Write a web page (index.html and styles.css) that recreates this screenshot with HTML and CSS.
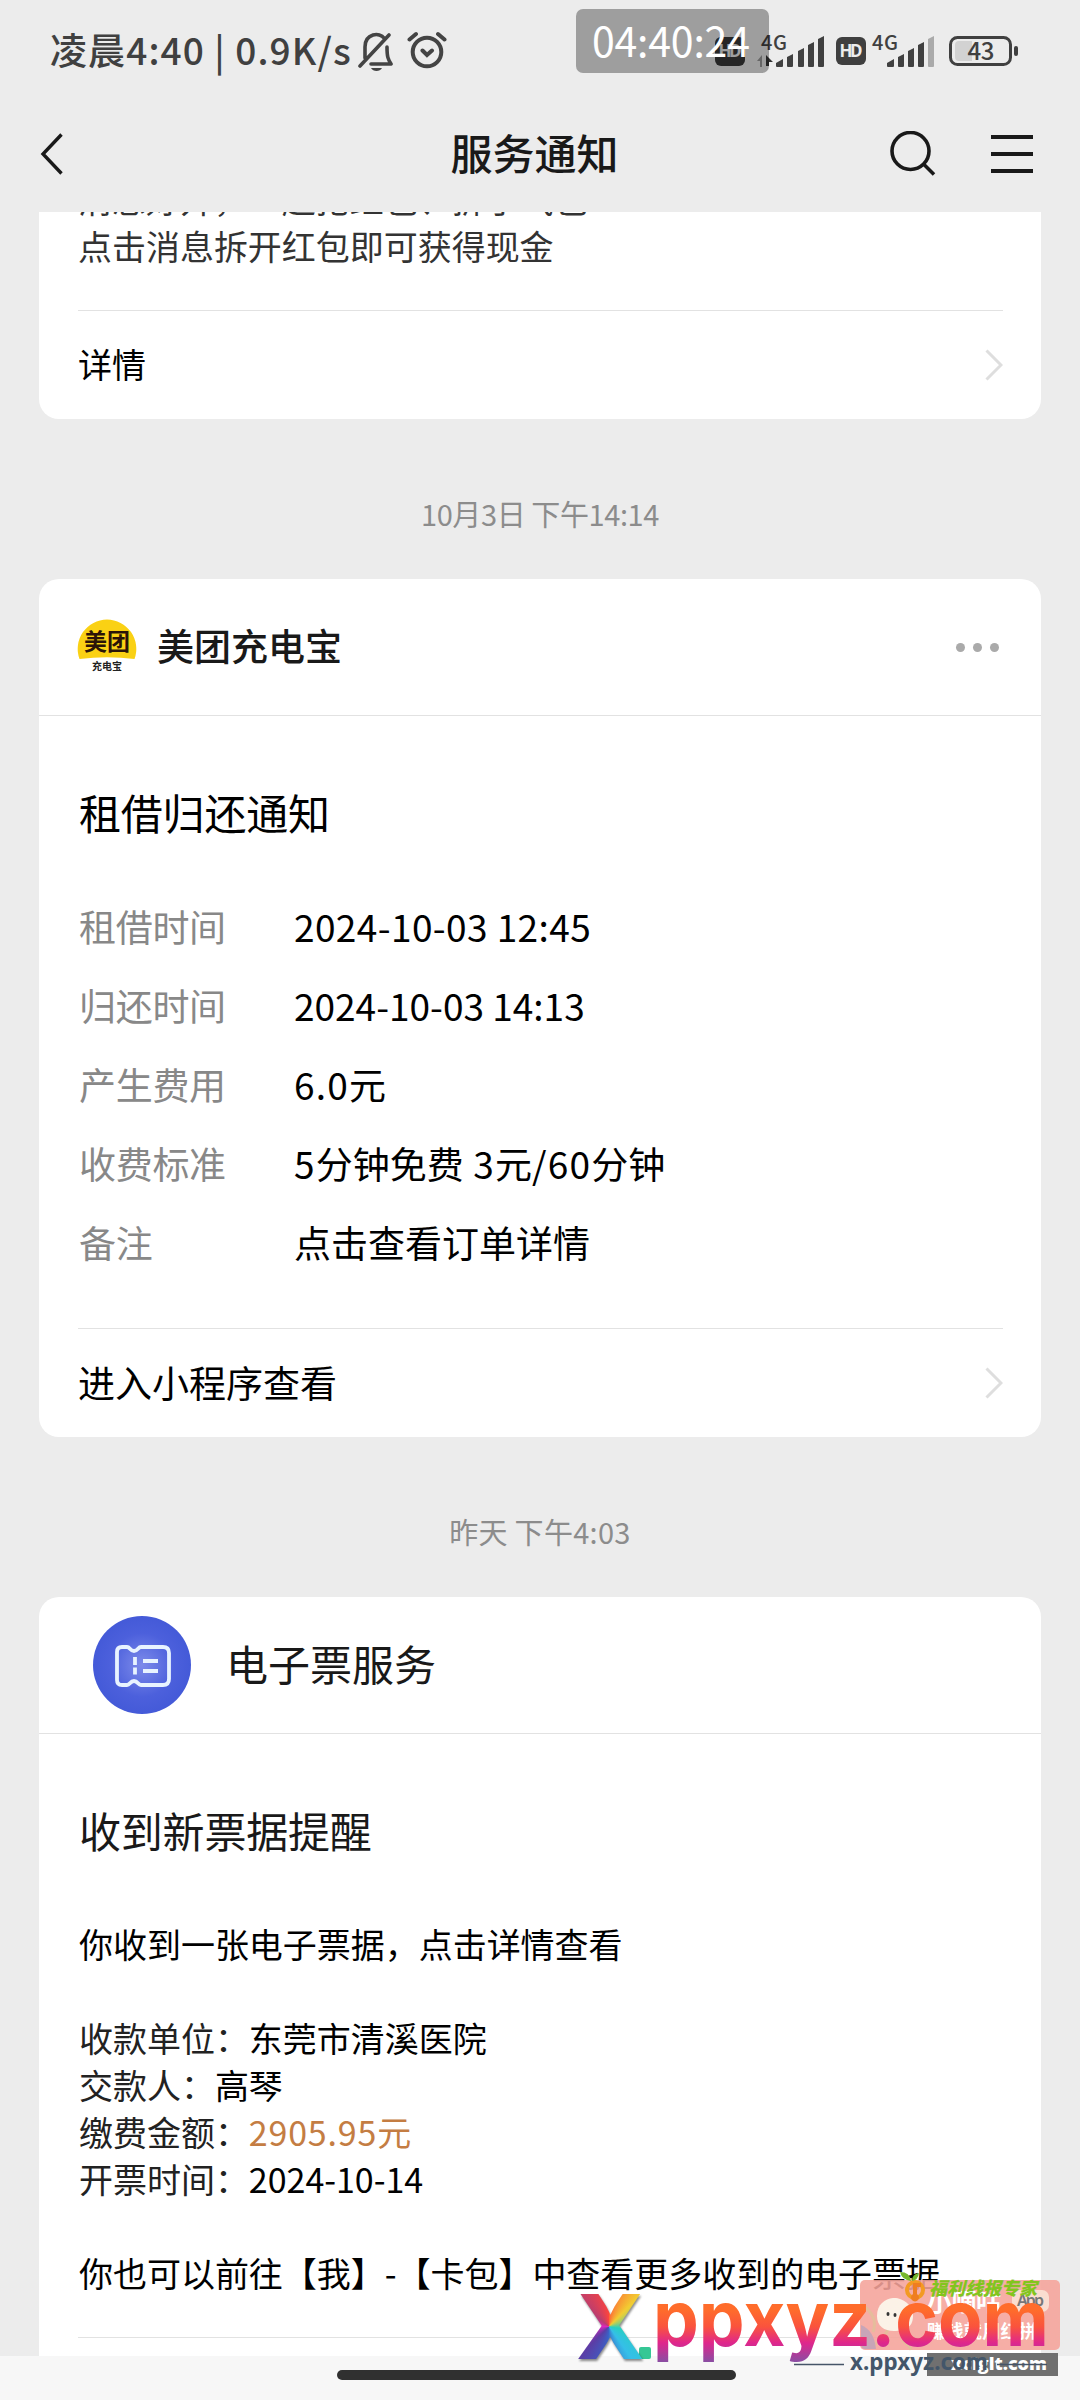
FILE: index.html
```html
<!DOCTYPE html>
<html lang="zh-CN">
<head>
<meta charset="utf-8">
<title>服务通知</title>
<link rel="stylesheet" href="styles.css">
</head>
<body>
<div class="screen">
  <header class="top">
    <div class="status">
      <span class="clock">凌晨4:40 | 0.9K/s</span>
      <svg class="bell" width="36" height="40" viewBox="0 0 36 40" fill="none" stroke="#444" stroke-width="3.6" stroke-linecap="round" stroke-linejoin="round"><path d="M7 26V15C7 1 22 0 26 6M31 3L2 34M29 15c0 10 1 12 4 17H13"/><path d="M13 36h11c-2 4-9 4-11 0z" fill="#444" stroke="none"/></svg>
      <svg class="alarm" width="40" height="40" viewBox="0 0 40 40" fill="none" stroke="#444" stroke-width="4" stroke-linecap="round"><circle cx="20" cy="22" r="14.3"/><path d="M2.500 9.500L9 4M37.500 9.500L31 4M15.500 20.500L20 25l5-4.500"/></svg>
      <svg class="signals" width="310" height="50" viewBox="0 0 310 50">
        <rect x="5" y="11" width="30" height="29" rx="6" fill="#3a3a3a"/><text class="hd" x="8.500" y="31" textLength="23">HD</text>
        <text class="net" x="51" y="24" textLength="26">4G</text>
        <path fill="#999" d="M47 35l5-6v12h-2v-6z"/><path fill="#333" d="M56 29l7 7h-4v4h-3z"/>
        <g fill="#404040"><path d="M66 37l7-4v7a1 1 0 0 1-1 1h-5a1 1 0 0 1-1-1zM77 31l6-3v12a1 1 0 0 1-1 1h-4a1 1 0 0 1-1-1zM88 25l6-3v18a1 1 0 0 1-1 1h-4a1 1 0 0 1-1-1zM98 19l6-3v24a1 1 0 0 1-1 1h-4a1 1 0 0 1-1-1zM108 13l6-3v30a1 1 0 0 1-1 1h-4a1 1 0 0 1-1-1z"/></g>
        <rect x="126" y="11" width="30" height="28" rx="6" fill="#3f3f3f"/><text class="hd" x="129.500" y="31" textLength="23">HD</text>
        <text class="net" x="162" y="24" textLength="26">4G</text>
        <path fill="#404040" d="M177 37l7-4v7a1 1 0 0 1-1 1h-5a1 1 0 0 1-1-1zM188 31l6-3v12a1 1 0 0 1-1 1h-4a1 1 0 0 1-1-1zM198 25l6-3v18a1 1 0 0 1-1 1h-4a1 1 0 0 1-1-1zM208 19l6-3v24a1 1 0 0 1-1 1h-4a1 1 0 0 1-1-1z"/><path fill="#aaa" d="M218 13l6-3v30a1 1 0 0 1-1 1h-4a1 1 0 0 1-1-1z"/>
        <path fill="#d2d2d2" d="M249 15h13v20h-13a4 4 0 0 1-4-4V19a4 4 0 0 1 4-4z"/>
        <rect x="240.500" y="11.500" width="60" height="27" rx="7" fill="none" stroke="#404040" stroke-width="3"/><rect x="304" y="20" width="4" height="10" rx="2" fill="#404040"/>
        <text class="battery" x="257.500" y="34" textLength="27">43</text>
      </svg>
      <div class="timer">04:40:24</div>
    </div>
    <nav class="nav">
      <svg width="24" height="42" viewBox="0 0 24 42" fill="none" stroke="#191919" stroke-width="3.4"><path d="M21.500 1.500L3 21l18.500 19.500"/></svg>
      <h1>服务通知</h1>
      <div class="tools">
        <svg width="46" height="46" viewBox="0 0 46 46" fill="none" stroke="#191919" stroke-width="3.600"><circle cx="20.500" cy="20" r="18.500"/><path d="M33.500 33L44 43.500"/></svg>
        <svg width="42" height="40" viewBox="0 0 42 40" fill="#191919"><path d="M0 1h42v4H0zM0 18h42v4H0zM0 35h42v4H0z"/></svg>
      </div>
    </nav>
  </header>

  <main class="feed">
    <section class="card card-cut">
      <div class="message muted">消息好开，一起抢红包、拆了气包<br>点击消息拆开红包即可获得现金</div>
      <a class="more small">详情<svg class="chev" width="18" height="32" viewBox="0 0 18 32"><path d="M1.500 1.500L16 16 1.500 30.500"/></svg></a>
    </section>

    <time class="date tight">10月3日 下午14:14</time>

    <section class="card">
      <div class="card-head">
        <svg class="logo" width="60" height="60" viewBox="0 0 60 60"><path fill="#fad114" d="M2.500 43A29.300 29.300 0 1 1 57.500 43Q30 39.500 2.500 43z"/><text class="logo-main" x="7" y="33.500" textLength="46">美团</text><text class="logo-sub" x="15" y="54" textLength="30">充电宝</text></svg>
        <span class="name bold">美团充电宝</span>
        <span class="dots"><i></i><i></i><i></i></span>
      </div>
      <div class="detail">
        <h2>租借归还通知</h2>
        <dl>
          <dt>租借时间</dt><dd class="wide">2024-10-03 12:45</dd>
          <dt>归还时间</dt><dd>2024-10-03 14:13</dd>
          <dt>产生费用</dt><dd><span class="num">6.0</span>元</dd>
          <dt>收费标准</dt><dd><span class="num">5</span>分钟免费<span class="num"> 3</span>元<span class="num">/60</span>分钟</dd>
          <dt>备注</dt><dd>点击查看订单详情</dd>
        </dl>
      </div>
      <a class="more">进入小程序查看<svg class="chev" width="18" height="32" viewBox="0 0 18 32"><path d="M1.500 1.500L16 16 1.500 30.500"/></svg></a>
    </section>

    <time class="date">昨天 下午4:03</time>

    <section class="card">
      <div class="card-head ticket-head">
        <svg width="98" height="98" viewBox="0 0 98 98"><defs><radialGradient id="glow"><stop offset="0" stop-color="#7d8bea"/><stop offset=".65" stop-color="#4c60dc"/><stop offset="1" stop-color="#445ad8"/></radialGradient></defs><circle cx="49" cy="49" r="49" fill="url(#glow)"/><g fill="none" stroke="#e8f3ff" stroke-width="3.800" stroke-linejoin="round"><path d="M29 31h5c3 0 3 4 7 4s4-4 7-4h22q6 0 6 6v26q0 6-6 6H48c-3 0-3-4-7-4s-4 4-7 4h-5q-5 0-5-5V36q0-5 5-5z"/><path d="M50 45h15M50 55h15M42 41v8M42 51.500v7"/></g></svg>
        <span class="name">电子票服务</span>
      </div>
      <div class="ticket">
        <h2>收到新票据提醒</h2>
        <div class="message">你收到一张电子票据，点击详情查看<br><br><span>收款单位：</span>东莞市清溪医院<br><span>交款人：</span>高琴<br><span>缴费金额：</span><b>2905.95元</b><br><span>开票时间：</span>2024-10-14<br><br>你也可以前往【我】-【卡包】中查看更多收到的电子票据</div>
      </div>
      <a class="more"></a>
    </section>
  </main>

  <footer class="home"><div class="handle"></div></footer>

  <div class="promo">
    <svg width="210" height="110" viewBox="0 0 210 110">
      <rect y="10" width="200" height="70" rx="5" fill="#f5a39a" opacity=".88"/>
      <path d="M1 34q18 12 12 28M10 78q15-10 20-22M42 70q8 6 9 10" stroke="#e5bd9c" stroke-width="3" fill="none"/><path d="M1 55q13 5 15 24H5q-4 0-4-5z" fill="#c8a5b7"/>
      <path d="M17 46c0-12 8-17 16-18s20 6 20 18-9 15-19 15-17-5-17-15z" fill="#fbf2e7"/><g fill="#333"><ellipse cx="28" cy="44" rx="1.500" ry="2"/><ellipse cx="35" cy="45" rx="1.500" ry="2"/></g>
      <rect x="152" y="20" width="37" height="22" rx="7" fill="#faddd0"/><text class="app" x="157" y="36" textLength="27">App</text>
      <text class="promo-name" x="67" y="41" textLength="74">小嘀咕</text><text class="promo-sub" x="67" y="68" textLength="110">赚钱就用红拼</text>
      <circle cx="55" cy="20" r="8" fill="none" stroke="#f39a22" stroke-width="4"/><path fill="#ef7d21" d="M53 24V13h8v4h-4v7a4 4 0 1 1-4 0z"/><path fill="#75b82d" d="M40 2q10 0 11 9-9-1-11-9M52 11q0-7 7-8-1 7-7 8"/>
      <text class="green" x="69" y="25" textLength="108">福利线报专家</text>
      <rect x="67" y="83" width="131" height="23" fill="#707070"/><text class="forum" x="91" y="100" textLength="96" lengthAdjust="spacingAndGlyphs">xciglt.com</text>
    </svg>
  </div>
  <div class="site">
    <span class="site-x">X</span>
    <svg width="490" height="100" viewBox="0 0 490 100"><defs><linearGradient id="flame" gradientUnits="userSpaceOnUse" x1="0" y1="18" x2="0" y2="78"><stop offset=".1" stop-color="#ff6c2b"/><stop offset=".38" stop-color="#fa533d"/><stop offset=".65" stop-color="#df268d"/><stop offset="1" stop-color="#8052a5"/></linearGradient></defs>
      <rect x="69" y="61" width="12" height="12" rx="2" fill="#35c795"/>
      <text class="site-name" x="83" y="60" textLength="396" lengthAdjust="spacingAndGlyphs">ppxyz.com</text>
      <path d="M224 78.500h50M427 78.500h50" stroke="#465568" stroke-width="1.500"/><text class="site-url" x="280" y="84" textLength="138" lengthAdjust="spacingAndGlyphs">x.ppxyz.com</text>
    </svg>
  </div>
</div>
</body>
</html>
```
FILE: styles.css
```css
* { box-sizing: border-box; }
body { margin: 0; background: #ececec; font-family: "Noto Sans CJK SC", sans-serif; color: #000; }
.screen { position: relative; width: 1080px; height: 2400px; overflow: hidden; display: flex; flex-direction: column; background: #ececec; }
h1, h2, dl, dd { margin: 0; font-weight: 400; }
svg { display: block; flex: none; }

.top { height: 212px; flex: none; display: flex; flex-direction: column; position: relative; z-index: 1; background: #ececec; }
.status { position: relative; height: 100px; display: flex; align-items: flex-start; padding: 0 60px 0 50px; }
.clock { width: 308px; font-size: 37px; line-height: 60px; margin-top: 19px; color: #404040; font-weight: 500; white-space: nowrap; letter-spacing: 1.1px; }
.bell { margin-top: 32px; }
.alarm { margin: 30px 0 0 13px; }
.signals { margin: 26px 0 0 263px; }
.hd { font: 700 17px "Noto Sans", sans-serif; fill: #ececec; }
.net { font: 500 20px "Noto Sans CJK SC", sans-serif; fill: #404040; }
.battery { font: 500 24px "Noto Sans CJK SC", sans-serif; fill: #404040; }
.timer { position: absolute; left: 576px; top: 9px; width: 193px; height: 64px; border-radius: 7px; background: rgba(0,0,0,.33); color: #fff; font-size: 41px; line-height: 61px; padding-left: 16px; letter-spacing: -.2px; white-space: nowrap; }
.nav { height: 112px; display: grid; grid-template-columns: 200px 1fr 200px; align-items: center; padding: 0 47px 5px 40px; }
.nav h1 { text-align: center; font-size: 42px; line-height: 60px; font-weight: 500; color: #191919; padding: 0 4px 4px 0; }
.tools { display: flex; justify-content: flex-end; align-items: center; gap: 55px; }

.feed { flex: 1; min-height: 0; overflow: hidden; padding: 0 39px; }
.card { background: #fff; border-radius: 20px; overflow: hidden; }
.card-cut { margin-top: -36px; }
.message { padding: 0 40px 41px 40px; font-size: 34px; line-height: 47px; letter-spacing: -.03px; white-space: nowrap; }
.card-cut .message { margin-top: -1px; height: 135px; padding-left: 39px; }
.muted { color: #333; }
.more { height: 109px; margin: 0 38px 0 39px; border-top: 1px solid #e2e2e2; display: flex; justify-content: space-between; align-items: center; font-size: 37px; line-height: 56px; padding-bottom: 3px; }
.more.small { font-size: 34px; }
.chev { fill: none; stroke: #dedede; stroke-width: 3; position: relative; top: 1px; }
.date { display: block; height: 160px; padding-top: 30px; line-height: 128px; text-align: center; font-size: 29px; color: #8c8c8c; letter-spacing: .3px; }
.tight { letter-spacing: -.4px; }
.card-head { height: 137px; border-bottom: 1px solid #e2e2e2; display: flex; align-items: center; padding: 0 38px; }
.logo { margin-top: -3px; }
.logo-main { font: 700 23px "Noto Sans CJK SC", sans-serif; fill: #2b1408; }
.logo-sub { font: 700 10px "Noto Sans CJK SC", sans-serif; fill: #222; }
.name { margin-left: 20px; font-size: 37px; color: #191919; padding-bottom: 4px; }
.bold { font-weight: 500; }
.dots { margin-left: auto; display: flex; gap: 8px; padding-right: 4px; }
.dots i { width: 9px; height: 9px; border-radius: 50%; background: #aaa; }
.detail { padding: 66px 40px 47px; }
h2 { font-size: 42px; line-height: 60px; letter-spacing: -.2px; }
dl { margin-top: 44px; display: grid; grid-template-columns: 215px 1fr; grid-auto-rows: 79px; align-items: center; font-size: 37px; white-space: nowrap; }
dt { color: #888; letter-spacing: -.3px; }
.wide { letter-spacing: .4px; }
.num { letter-spacing: 1.2px; white-space: pre; }
.ticket-head { padding-left: 54px; }
.ticket-head .name { margin-left: 35px; font-size: 42px; padding-bottom: 5px; }
.ticket { padding-top: 66px; }
.ticket h2 { padding-left: 40px; color: #191919; }
.ticket .message { margin-top: 60px; }
.message span { color: #222; }
.message b { font-weight: 400; color: #c47d43; letter-spacing: .8px; }

.home { height: 44px; flex: none; background: #f7f7f7; padding: 14px 0 0 337px; }
.handle { width: 399px; height: 10px; border-radius: 5px; background: #303030; }

.promo { position: absolute; left: 860px; top: 2270px; }
.app { font: 600 16px "Noto Sans", sans-serif; fill: #777; }
.promo-name { font: 700 25px "Noto Sans CJK SC", sans-serif; fill: #fff; }
.promo-sub { font: 700 18px "Noto Sans CJK SC", sans-serif; fill: #fff; }
.green { font: italic 900 18px "Noto Sans CJK SC", sans-serif; fill: #82c51e; }
.forum { font: 800 17px "Open Sans", sans-serif; fill: #fff; }
.site { position: absolute; left: 570px; top: 2286px; width: 490px; height: 100px; }
.site-x { position: absolute; left: 6px; top: 8px; height: 65px; width: 66px; font: 800 90px/65px Inter, sans-serif; color: transparent; background: conic-gradient(from 0deg at 50% 50%, #ff6036, #f2cd32 45deg, #26d0c0 100deg, #35bfe8 145deg, #3b60c5 185deg, #5b3da5 225deg, #df26bd 270deg, #b93d70 310deg, #ff443c); background-clip: text; -webkit-background-clip: text; filter: drop-shadow(1px 2px 1px rgba(0,0,0,.45)); }
.site-name { font: 700 77px Inter, sans-serif; fill: url(#flame); }
.site-url { font: 700 23px "Noto Sans", sans-serif; fill: #43566a; }
```
